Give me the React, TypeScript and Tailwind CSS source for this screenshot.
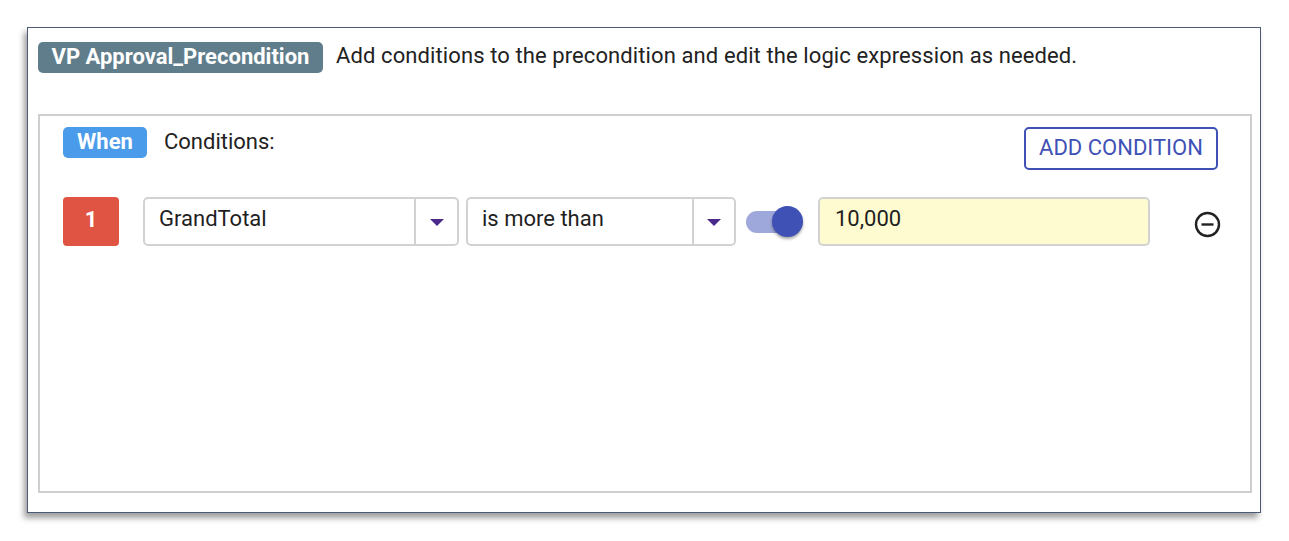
import React from 'react';

function Caret() {
  return (
    <svg width="16" height="8" viewBox="0 0 16 8">
      <path d="M1 0 L15 0 L8 7 Z" fill="#4b2a8c" />
    </svg>
  );
}

function SelectBox({ value, width, textWidth }: { value: string; width: string; textWidth: string }) {
  return (
    <div className={`flex h-[49px] shrink-0 ${width} rounded-[5px] border-2 border-[#d2d2d2] bg-white`}>
      <div className={`flex ${textWidth} items-center border-r-2 border-[#d2d2d2] pl-[14px] pb-[6px]`}>
        <span className="text-[22px] text-[#1f1f1f]">{value}</span>
      </div>
      <div className="flex flex-1 items-center justify-center pt-[2px]">
        <Caret />
      </div>
    </div>
  );
}

export default function App() {
  return (
    <div className="h-[541px] w-[1289px] overflow-hidden bg-white pt-[27px] pl-[27px] font-['Roboto','Liberation_Sans',sans-serif]">
      <div className="h-[486px] w-[1234px] border border-[#4b5b73] bg-white pt-[14px] pl-[10px] shadow-[-3px_5px_6px_rgba(0,0,0,0.38)]">
        {/* Title row */}
        <div className="flex h-[31px] items-center">
          <div className="flex h-[31px] w-[285px] items-center justify-center rounded-[5px] bg-[#607d8b] pb-[3px] text-[22px] font-bold text-white">
            VP Approval_Precondition
          </div>
          <span className="ml-[13px] pb-[4px] text-[22px] tracking-[0.1px] text-[#222]">
            Add conditions to the precondition and edit the logic expression as needed.
          </span>
        </div>

        {/* Conditions panel */}
        <div className="mt-[41px] h-[379px] w-[1214px] border-2 border-[#cfcfcf] pt-[11px] pl-[23px] pr-[28px]">
          <div className="flex items-start justify-between pr-[4px]">
            <div className="flex h-[31px] items-center">
              <div className="flex h-[31px] w-[84px] items-center justify-center rounded-[5px] bg-[#4a9be9] pb-[3px] text-[22px] font-bold text-white">
                When
              </div>
              <span className="ml-[17px] pb-[3px] text-[22px] text-[#222]">Conditions:</span>
            </div>
            <button className="flex h-[43px] w-[194px] items-center justify-center rounded-[5px] border-2 border-[#3f51b5] pb-[2px] text-[22px] text-[#3f51b5]">
              ADD CONDITION
            </button>
          </div>

          {/* Condition row */}
          <div className="mt-[27px] flex h-[49px] items-center">
            <div className="flex h-[49px] w-[56px] shrink-0 items-center justify-center rounded-[4px] bg-[#e05443] pb-[5px] text-[22px] font-bold text-white">
              1
            </div>
            <div className="ml-[24px]">
              <SelectBox value="GrandTotal" width="w-[316px]" textWidth="w-[271px]" />
            </div>
            <div className="ml-[7px]">
              <SelectBox value="is more than" width="w-[270px]" textWidth="w-[226px]" />
            </div>

            {/* Toggle */}
            <div className="relative ml-[10px] h-[31px] w-[58px] shrink-0">
              <div className="absolute left-0 top-[5px] h-[22px] w-[50px] rounded-full bg-[#9fa8da]" />
              <div className="absolute left-[26px] top-0 h-[31px] w-[31px] rounded-full bg-[#3f51b5] shadow-[0_2px_3px_rgba(0,0,0,0.35)]" />
            </div>

            {/* Value input */}
            <div className="ml-[14px] flex h-[49px] w-[332px] shrink-0 items-center rounded-[5px] border-2 border-[#d2d2d2] bg-[#fffbd0] pl-[15px] pb-[6px]">
              <span className="text-[22px] text-[#1f1f1f]">10,000</span>
            </div>

            {/* Remove */}
            <div className="ml-[44px] mt-[6px] shrink-0">
              <svg width="27" height="27" viewBox="0 0 27 27">
                <circle cx="13.5" cy="13.5" r="11.5" fill="none" stroke="#222" strokeWidth="2.4" />
                <line x1="7.5" y1="13.5" x2="19.5" y2="13.5" stroke="#222" strokeWidth="2.4" />
              </svg>
            </div>
          </div>
        </div>
      </div>
    </div>
  );
}
